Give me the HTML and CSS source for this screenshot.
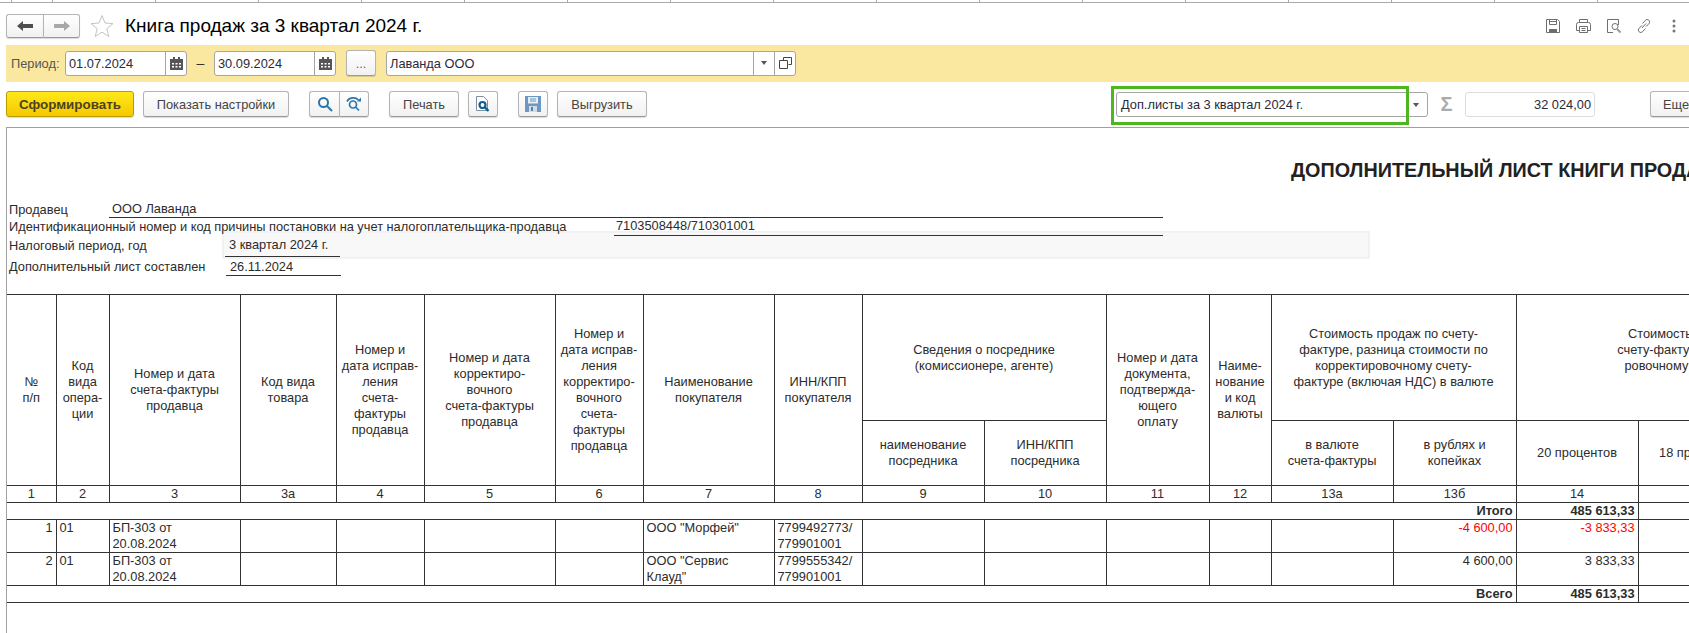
FILE: index.html
```html
<!DOCTYPE html>
<html lang="ru">
<head>
    <meta charset="UTF-8">
    <title>Книга продаж за 3 квартал 2024 г.</title>
    <link rel="stylesheet" href="styles.css">
</head>
<body>
    <div class="ruler"></div>

    <div class="header">
        <div class="btn-group nav">
            <button class="btn nav-btn">
                <svg width="16" height="12" viewBox="0 0 16 12"><path d="M0 6l6-5v3h10v4H6v3z" fill="#4d4d4d"/></svg>
            </button>
            <button class="btn nav-btn">
                <svg width="16" height="12" viewBox="0 0 16 12"><path d="M16 6l-6-5v3H0v4h10v3z" fill="#a8a8a8"/></svg>
            </button>
        </div>
        <svg class="star" width="24" height="24" viewBox="0 0 24 24"><path d="M12 1.500l3 7.500 8 .6-6.200 5.100 2 7.800L12 18.200 5.200 22.500l2-7.800L1 9.600 9 9z" fill="#fff" stroke="#c4c4c4"/></svg>
        <h1 class="page-title">Книга продаж за 3 квартал 2024 г.</h1>
        <div class="header-icons">
            <svg width="16" height="16" viewBox="0 0 16 16" fill="none" stroke="#6e6e6e"><path d="M1.500 1.500h11l2 2v11h-13z"/><path d="M4.500 1.500v5h7v-5M4.500 3.500h7"/><path d="M4 11h8v3.500H4z" fill="#6e6e6e" stroke="none"/></svg>
            <svg width="17" height="16" viewBox="0 0 17 16" fill="none" stroke="#6e6e6e"><path d="M4.500 4.500v-3h8v3"/><path d="M4 12.500H1.500v-6a2 2 0 0 1 2-2h10a2 2 0 0 1 2 2v6H13"/><path d="M4.500 8.500h8v6h-8zM6.500 10.500h4M6.500 12.500h4"/></svg>
            <svg width="16" height="16" viewBox="0 0 16 16" fill="none" stroke="#6e6e6e"><path d="M12.500 7V1.500h-11v13H7"/><circle cx="9" cy="8.500" r="3"/><path d="M11 11l3.500 3.500" stroke="#999" stroke-width="2"/></svg>
            <svg width="16" height="16" viewBox="0 0 16 16" fill="none" stroke="#6e6e6e"><path d="M6.500 5.500l3-3.200a2.300 2.300 0 0 1 3.500 3.200l-3 3.200M9.500 10.500l-3 3.200A2.300 2.300 0 0 1 3 10.500l3-3.200M6 10l4-4.500"/></svg>
            <svg width="16" height="16" viewBox="0 0 16 16" fill="#777"><circle cx="8" cy="3" r="1.500"/><circle cx="8" cy="8" r="1.500"/><circle cx="8" cy="13" r="1.500"/></svg>
        </div>
    </div>

    <div class="period-bar">
        <span class="period-label">Период:</span>
        <div class="field date-field">
            <span class="field-text">01.07.2024</span>
            <span class="field-btn">
                <svg width="13" height="13" viewBox="0 0 13 13"><path d="M0 2h13v11H0z" fill="#555"/><path d="M3 0h2v3H3zM8 0h2v3H8z" fill="#555"/><path d="M2 6h2v1.500H2zM5.500 6h2v1.500h-2zM9 6h2v1.500H9zM2 9h2v1.500H2zM5.500 9h2v1.500h-2zM9 9h2v1.500H9z" fill="#fff"/></svg>
            </span>
        </div>
        <span class="period-dash">–</span>
        <div class="field date-field">
            <span class="field-text">30.09.2024</span>
            <span class="field-btn">
                <svg width="13" height="13" viewBox="0 0 13 13"><path d="M0 2h13v11H0z" fill="#555"/><path d="M3 0h2v3H3zM8 0h2v3H8z" fill="#555"/><path d="M2 6h2v1.500H2zM5.500 6h2v1.500h-2zM9 6h2v1.500H9zM2 9h2v1.500H2zM5.500 9h2v1.500h-2zM9 9h2v1.500H9z" fill="#fff"/></svg>
            </span>
        </div>
        <button class="btn dots-btn">...</button>
        <div class="field org-field">
            <span class="field-text">Лаванда ООО</span>
            <span class="field-btn org-btn"><span class="arrow"></span></span>
            <span class="field-btn org-btn">
                <svg width="13" height="13" viewBox="0 0 13 13" fill="none" stroke="#444"><path d="M4.500 3.500v-3h8v7h-3"/><path d="M.5 4.500h8v8h-8z" transform="translate(0 -1)"/></svg>
            </span>
        </div>
    </div>

    <div class="toolbar">
        <button class="btn btn-main">Сформировать</button>
        <button class="btn btn-settings">Показать настройки</button>
        <div class="btn-group search">
            <button class="btn icon-btn">
                <svg width="16" height="16" viewBox="0 0 16 16" fill="none" stroke="#2b76a8" stroke-width="2"><circle cx="6.500" cy="6.500" r="4.500"/><path d="M10 10l5 5"/></svg>
            </button>
            <button class="btn icon-btn">
                <svg width="18" height="16" viewBox="0 0 18 16" fill="none" stroke="#2b76a8" stroke-width="1.700"><circle cx="8" cy="8.500" r="3.500"/><path d="M10.500 11l3.500 3.500"/><path d="M2 5.500C4 1.500 10 .5 13.500 4"/><path d="M12 5.500h4V1.500z" fill="#2b76a8" stroke="none"/></svg>
            </button>
        </div>
        <button class="btn btn-print">Печать</button>
        <button class="btn btn-square btn-preview">
            <svg width="16" height="18" viewBox="0 0 16 18"><path d="M1.500 1.500h7l4 4v10h-11z" fill="#fff" stroke="#7f8fa0"/><circle cx="7.500" cy="10" r="3" fill="#fff" stroke="#0f5e8c" stroke-width="2.200"/><path d="M10 12.500l3.500 3.500" stroke="#0f5e8c" stroke-width="2.400"/></svg>
        </button>
        <button class="btn btn-square btn-save">
            <svg width="16" height="16" viewBox="0 0 16 16"><path d="M0 0h16v16H0z" fill="#6d98c4"/><path d="M3 1h10v6.500H3z" fill="#e8eef5"/><path d="M5 3h6M5 5h6" stroke="#6d98c4"/><path d="M4 10h8v6H4z" fill="#d5dbe2"/><path d="M6 11h2v4H6z" fill="#557fa8"/></svg>
        </button>
        <button class="btn btn-export">Выгрузить</button>

        <div class="field sheet-field">
            <span class="field-text">Доп.листы за 3 квартал 2024 г.</span>
            <span class="arrow sheet-arrow"></span>
            <div class="highlight"></div>
        </div>
        <span class="sigma">Σ</span>
        <div class="sum-field">32 024,00</div>
        <button class="btn btn-more">Еще</button>
    </div>

    <div class="report">
        <div class="report-title">ДОПОЛНИТЕЛЬНЫЙ ЛИСТ КНИГИ ПРОДАЖ</div>

        <div class="info-row seller-row">
            <span class="seller-label">Продавец</span>
            <span class="info-value seller-value">ООО Лаванда</span>
        </div>
        <div class="info-row inn-row">
            <span class="inn-label">Идентификационный номер и код причины постановки на учет налогоплательщика-продавца</span>
            <span class="info-value inn-value">7103508448/710301001</span>
        </div>
        <div class="info-row period-row">
            <span class="period-name">Налоговый период, год</span>
            <div class="period-box"><span class="info-value short-value">3 квартал 2024 г.</span></div>
        </div>
        <div class="info-row made-row">
            <span class="period-name">Дополнительный лист составлен</span>
            <span class="info-value short-value made-value">26.11.2024</span>
        </div>

        <table class="ledger">
            <colgroup>
                <col class="c49"><col class="c53"><col class="c131"><col class="c96"><col class="c88"><col class="c131"><col class="c88"><col class="c131"><col class="c88"><col class="c122"><col class="c122"><col class="c103"><col class="c62"><col class="c122"><col class="c123"><col class="c122"><col class="c122"><col class="c122"><col class="c122">
            </colgroup>
            <thead>
                <tr class="head-top">
                    <th rowspan="2">№<br>п/п</th>
                    <th rowspan="2">Код<br>вида<br>опера-<br>ции</th>
                    <th rowspan="2">Номер и дата<br>счета-фактуры<br>продавца</th>
                    <th rowspan="2">Код вида<br>товара</th>
                    <th rowspan="2">Номер и<br>дата исправ-<br>ления<br>счета-<br>фактуры<br>продавца</th>
                    <th rowspan="2">Номер и дата<br>корректиро-<br>вочного<br>счета-фактуры<br>продавца</th>
                    <th rowspan="2">Номер и<br>дата исправ-<br>ления<br>корректиро-<br>вочного<br>счета-<br>фактуры<br>продавца</th>
                    <th rowspan="2">Наименование<br>покупателя</th>
                    <th rowspan="2">ИНН/КПП<br>покупателя</th>
                    <th colspan="2">Сведения о посреднике<br>(комиссионере, агенте)</th>
                    <th rowspan="2">Номер и дата<br>документа,<br>подтвержда-<br>ющего<br>оплату</th>
                    <th rowspan="2">Наиме-<br>нование<br>и код<br>валюты</th>
                    <th colspan="2">Стоимость продаж по счету-<br>фактуре, разница стоимости по<br>корректировочному счету-<br>фактуре (включая НДС) в валюте</th>
                    <th colspan="4">Стоимость продаж, облагаемых налогом, по<br>счету-фактуре, разница стоимости по корректи-<br>ровочному счету-фактуре (без НДС) в рублях<br>и копейках, при ставке</th>
                </tr>
                <tr class="head-sub">
                    <th>наименование<br>посредника</th>
                    <th>ИНН/КПП<br>посредника</th>
                    <th>в валюте<br>счета-фактуры</th>
                    <th>в рублях и<br>копейках</th>
                    <th>20 процентов</th>
                    <th>18 процентов</th>
                    <th>10 процентов</th>
                    <th>0 процентов</th>
                </tr>
                <tr class="head-num">
                    <th>1</th><th>2</th><th>3</th><th>3а</th><th>4</th><th>5</th><th>6</th><th>7</th><th>8</th><th>9</th><th>10</th><th>11</th><th>12</th><th>13а</th><th>13б</th><th>14</th><th>15</th><th>16</th><th>17</th>
                </tr>
            </thead>
            <tbody>
                <tr class="total-row">
                    <td colspan="15" class="num bold">Итого</td>
                    <td class="num bold">485 613,33</td>
                    <td></td><td></td><td></td>
                </tr>
                <tr class="data-row">
                    <td class="num">1</td><td>01</td><td>БП-303 от<br>20.08.2024</td><td></td><td></td><td></td><td></td>
                    <td>ООО "Морфей"</td><td>7799492773/<br>779901001</td><td></td><td></td><td></td><td></td><td></td>
                    <td class="num minus">-4 600,00</td><td class="num minus">-3 833,33</td><td></td><td></td><td></td>
                </tr>
                <tr class="data-row">
                    <td class="num">2</td><td>01</td><td>БП-303 от<br>20.08.2024</td><td></td><td></td><td></td><td></td>
                    <td>ООО "Сервис<br>Клауд"</td><td>7799555342/<br>779901001</td><td></td><td></td><td></td><td></td><td></td>
                    <td class="num">4 600,00</td><td class="num">3 833,33</td><td></td><td></td><td></td>
                </tr>
                <tr class="total-row">
                    <td colspan="15" class="num bold">Всего</td>
                    <td class="num bold">485 613,33</td>
                    <td></td><td></td><td></td>
                </tr>
            </tbody>
        </table>
    </div>
</body>
</html>
```

FILE: styles.css
```css
html, body {
    margin: 0;
    height: 633px;
    overflow: hidden;
    background: #fff;
}
body {
    font-family: "Liberation Sans", Arial, sans-serif;
    font-size: 12.8px;
    color: #333;
}

/* ruler at the very top */
.ruler {
    height: 3px;
    box-sizing: border-box;
    border-bottom: 1px solid #aaa;
    background: repeating-linear-gradient(90deg, #aaa 0, #aaa 1px, transparent 1px, transparent 103px) 52px 0;
}

/* buttons */
.btn {
    font: inherit;
    color: #444;
    height: 26px;
    padding: 0;
    border: 1px solid #b4b4b4;
    border-bottom-color: #999;
    border-radius: 3px;
    background: linear-gradient(#fff, #f1f1f1);
    box-shadow: 0 1px 1px rgba(0,0,0,0.15);
    display: flex;
    align-items: center;
    justify-content: center;
    flex-shrink: 0;
}
.btn-group {
    display: flex;
    flex-shrink: 0;
}
.btn-group .btn:first-child {
    border-radius: 3px 0 0 3px;
    border-right: none;
}
.btn-group .btn:last-child {
    border-radius: 0 3px 3px 0;
}

/* title row */
.header {
    height: 42px;
    display: flex;
    align-items: center;
    padding-left: 6px;
}
.nav {
    margin-top: 4px;
}
.nav-btn {
    width: 37px;
    height: 24px;
}
.star {
    margin: 3px 0 0 10px;
}
.page-title {
    margin: 3px 0 0 11px;
    font-size: 19px;
    font-weight: normal;
    color: #000;
    white-space: nowrap;
}
.header-icons {
    margin: 3px 0 0 auto;
    padding-right: 7px;
    display: flex;
    gap: 14px;
}

/* yellow period bar */
.period-bar {
    margin-left: 6px;
    height: 37px;
    display: flex;
    align-items: center;
    background: #fbe8a0;
    padding-bottom: 1px;
    box-sizing: border-box;
}
.period-label {
    margin-left: 5px;
    width: 54px;
    color: #555;
}
.period-dash {
    width: 27px;
    text-align: center;
    font-size: 14px;
}
.field {
    height: 25px;
    box-sizing: border-box;
    display: flex;
    align-items: center;
    background: #fff;
    border: 1px solid #a5a5a5;
    border-radius: 3px;
    flex-shrink: 0;
}
.field-text {
    flex: 1;
    padding-left: 3px;
    color: #2a2a3a;
    white-space: nowrap;
}
.field-btn {
    width: 20px;
    height: 100%;
    border-left: 1px solid #a5a5a5;
    display: flex;
    align-items: center;
    justify-content: center;
}
.date-field {
    width: 122px;
}
.dots-btn {
    width: 30px;
    margin: 0 10px;
    color: #666;
}
.org-field {
    width: 410px;
}
.org-btn {
    width: 20px;
}
.arrow {
    width: 0;
    height: 0;
    border: 3px solid transparent;
    border-top: 4px solid #555;
    border-bottom: none;
}

/* command row */
.toolbar {
    height: 45px;
    box-sizing: border-box;
    padding: 9px 0 0 6px;
    display: flex;
    align-items: flex-start;
}
.btn-main {
    width: 128px;
    font-size: 13.4px;
    font-weight: bold;
    color: #4a4320;
    border-color: #b5a000;
    background: linear-gradient(#ffe81a, #f6c800);
}
.btn-settings {
    width: 146px;
    margin-left: 9px;
}
.search {
    margin-left: 20px;
}
.icon-btn {
    width: 30px;
}
.btn-print {
    width: 70px;
    margin-left: 20px;
}
.btn-square {
    width: 30px;
}
.btn-preview {
    margin-left: 9px;
}
.btn-save {
    margin-left: 20px;
}
.btn-export {
    width: 90px;
    margin-left: 9px;
}
.sheet-field {
    position: relative;
    width: 312px;
    margin-left: 469px;
    margin-top: 1px;
    padding-left: 1px;
}
.sheet-arrow {
    margin-right: 8px;
}
.highlight {
    position: absolute;
    left: -6px;
    top: -7px;
    width: 292px;
    height: 33px;
    border: 3px solid #4cb81e;
}
.sigma {
    width: 37px;
    flex-shrink: 0;
    text-align: center;
    margin-top: 2px;
    font-size: 20px;
    font-weight: bold;
    color: #aaa;
}
.sum-field {
    width: 130px;
    height: 25px;
    line-height: 23px;
    margin-top: 1px;
    box-sizing: border-box;
    border: 1px solid #ddd;
    border-radius: 3px;
    text-align: right;
    padding-right: 3px;
    color: #2a2a3a;
    flex-shrink: 0;
}
.btn-more {
    width: 60px;
    margin-left: 55px;
    justify-content: flex-start;
    padding-left: 12px;
}

/* report sheet */
.report {
    margin-left: 6px;
    height: 506px;
    box-sizing: border-box;
    border-top: 1px solid #a0a0a0;
    border-left: 1px solid #a0a0a0;
    overflow: hidden;
}
.report-title {
    height: 73px;
    padding: 31px 0 0 1284px;
    box-sizing: border-box;
    font-size: 19.8px;
    font-weight: bold;
    color: #222;
    white-space: nowrap;
}
.info-row {
    display: flex;
    color: #2c2c2c;
    white-space: nowrap;
    padding-left: 2px;
}
.info-value {
    display: block;
    border-bottom: 1px solid #333;
    box-sizing: border-box;
}
.seller-row {
    height: 17px;
}
.seller-label {
    width: 100px;
    line-height: 18px;
}
.seller-value {
    width: 1054px;
    padding-left: 3px;
    line-height: 16px;
}
.inn-row {
    height: 18px;
    position: relative;
    z-index: 1;
}
.inn-label {
    width: 605px;
    line-height: 18px;
}
.inn-value {
    width: 549px;
    padding-left: 2px;
}
.period-row {
    height: 28px;
    margin-top: -5px;
    padding-left: 2px;
}
.period-name {
    width: 213px;
    line-height: 30px;
}
.period-box {
    width: 1148px;
    height: 28px;
    box-sizing: border-box;
    background: #f8f8f8;
    border: 2px solid #f2f2f2;
    padding: 3px 0 0 1px;
}
.short-value {
    width: 115px;
    height: 21px;
    padding-left: 4px;
    line-height: 18px;
}
.made-row {
    height: 17px;
    margin-bottom: 18px;
}
.made-row .period-name {
    width: 217px;
    line-height: 16px;
}
.made-value {
    height: 17px;
    line-height: 15px;
}

/* the ledger */
.ledger {
    table-layout: fixed;
    border-collapse: collapse;
    width: 1997px;
    line-height: 16px;
    color: #2c2c2c;
}
.ledger th, .ledger td {
    border: 1px solid #333;
    padding: 0 3px;
    font-weight: normal;
    vertical-align: middle;
    text-align: center;
    overflow: hidden;
    white-space: nowrap;
}
.ledger td {
    vertical-align: top;
    text-align: left;
}
.ledger th:first-child, .ledger td:first-child {
    border-left: none;
}
.ledger .num {
    text-align: right;
}
.ledger .bold {
    font-weight: bold;
}
.ledger .minus {
    color: #f00;
}
.head-top { height: 126px; }
.head-sub { height: 65px; }
.head-num { height: 17px; }
.total-row { height: 17px; }
.data-row { height: 33px; }
.c49 { width: 49px; }
.c53 { width: 53px; }
.c62 { width: 62px; }
.c88 { width: 88px; }
.c96 { width: 96px; }
.c103 { width: 103px; }
.c122 { width: 122px; }
.c123 { width: 123px; }
.c131 { width: 131px; }
```
